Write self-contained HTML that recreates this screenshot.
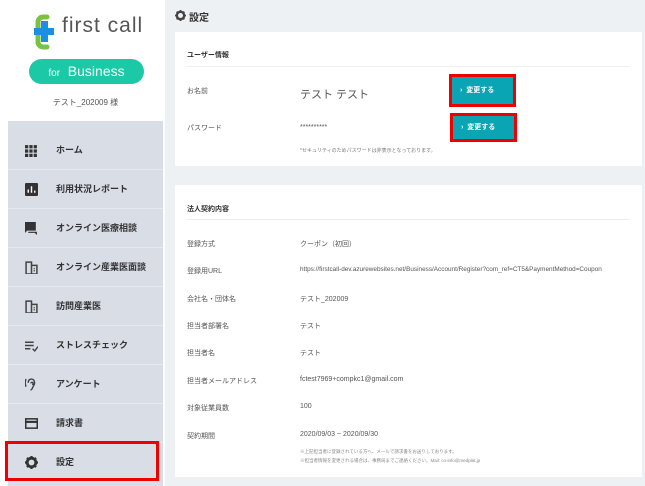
<!DOCTYPE html><html><head><meta charset="utf-8"><style>
*{margin:0;padding:0;box-sizing:border-box}
body{width:645px;height:486px;background:#fff;font-family:"Liberation Sans","Noto Sans CJK JP",sans-serif;position:relative;overflow:hidden;color:#555}
.abs{position:absolute}
.side{left:8px;top:4px;width:155px;height:482px;background:#fff}
.menu{left:8px;top:121px;width:155px;height:365px;background:#d8dde6}
.mi{position:absolute;left:8px;width:155px;height:39px;border-bottom:1px solid #e6e9ef;font-size:9px;font-weight:600;color:#333;line-height:39px;padding-left:48px}
.mi svg{position:absolute;left:17px;top:13px;width:13px;height:13px}
.main{left:165px;top:0;width:480px;height:486px;background:#eef1f4}
.card{position:absolute;background:#fff;left:175px;width:467px}
.t{position:absolute;font-size:7px;white-space:nowrap}
.btn{position:absolute;background:#0aa5b5;color:#fff;font-size:7px;font-weight:bold;line-height:27px;padding-left:8px;outline:3px solid #e00;outline-offset:0}
</style></head><body>
<div class="abs side"></div>
<svg class="abs" style="left:33px;top:13px" width="24" height="38" viewBox="0 0 24 38">
<path d="M14 4 H10 A5 5 0 0 0 5 9 V29 A5 5 0 0 0 10 34 H14" fill="none" stroke="#7cc242" stroke-width="5" stroke-linecap="round"/>
<rect x="1" y="15" width="20" height="7" fill="#1e8fe0"/><rect x="8" y="8" width="7" height="21" fill="#1e8fe0"/></svg>
<div class="abs" style="left:62px;top:14px;font-size:21px;color:#555;letter-spacing:1px">first call</div>
<div class="abs" style="left:29px;top:59px;width:115px;height:25px;border-radius:13px;background:#1cc9a6;color:#fff;text-align:center;line-height:25px;font-size:14px"><span style="font-size:10px">for</span>&nbsp; Business</div>
<div class="abs" style="left:0;width:171px;top:97px;text-align:center;font-size:8px;color:#555">テスト_202009 様</div>
<div class="abs menu"></div>
<div class="mi" style="top:131px"><svg viewBox="0 0 12 12" fill="#333"><rect x="0" y="1" width="3" height="3"/><rect x="4" y="1" width="3" height="3"/><rect x="8" y="1" width="3" height="3"/><rect x="0" y="5" width="3" height="3"/><rect x="4" y="5" width="3" height="3"/><rect x="8" y="5" width="3" height="3"/><rect x="0" y="9" width="3" height="3"/><rect x="4" y="9" width="3" height="3"/><rect x="8" y="9" width="3" height="3"/></svg>ホーム</div>
<div class="mi" style="top:170px"><svg viewBox="0 0 12 12"><rect width="12" height="12" rx="1" fill="#333"/><path d="M3 9V6M6 9V3M9 9V7" stroke="#fff" stroke-width="1.3"/></svg>利用状況レポート</div>
<div class="mi" style="top:209px"><svg viewBox="0 0 12 12" fill="#333"><path d="M0 0H10V8H2L0 10Z"/><path d="M11 3V12L9 10H3V9H11Z"/></svg>オンライン医療相談</div>
<div class="mi" style="top:248px"><svg viewBox="0 0 12 12" fill="none" stroke="#444" stroke-width="1.4"><path d="M1 12V1H6V12M6 4H11V12H1"/><path d="M8 7H9M8 9H9" /></svg>オンライン産業医面談</div>
<div class="mi" style="top:287px"><svg viewBox="0 0 12 12" fill="none" stroke="#444" stroke-width="1.4"><path d="M1 12V1H6V12M6 4H11V12H1"/><path d="M8 7H9M8 9H9"/></svg>訪問産業医</div>
<div class="mi" style="top:326px"><svg viewBox="0 0 12 12" fill="none" stroke="#444" stroke-width="1.3"><path d="M0 3H8M0 6H8M0 9H5M7 9L9 11L12 7"/></svg>ストレスチェック</div>
<div class="mi" style="top:365px"><svg viewBox="0 0 12 12" fill="none" stroke="#444" stroke-width="1.3"><path d="M5 11C7 11 7 8 8 7C9.5 5.5 9 1 6 1C3.5 1 3 3 3 4.5M5.5 5A1 1 0 1 1 6.5 6M1 1C0 3 0 6 1 8"/></svg>アンケート</div>
<div class="mi" style="top:404px"><svg viewBox="0 0 12 12" fill="none" stroke="#333" stroke-width="1.4"><rect x="0.7" y="1.7" width="10.6" height="8.6"/><path d="M1 4.5H11" stroke-width="2"/></svg>請求書</div>
<div class="mi" style="top:443px;border:none"><svg viewBox="0 0 12 12"><circle cx="6" cy="6" r="4" fill="none" stroke="#333" stroke-width="2.6"/><path d="M6 0V2.5M6 9.5V12M0 6H2.5M9.5 6H12M1.8 1.8L3.5 3.5M8.5 8.5L10.2 10.2M1.8 10.2L3.5 8.5M8.5 3.5L10.2 1.8" stroke="#333" stroke-width="2"/></svg>設定</div>
<div class="abs" style="left:5px;top:441px;width:154px;height:40px;border:3px solid #e00"></div>
<div class="abs main"></div>
<svg class="abs" style="left:175px;top:10px" width="11" height="11" viewBox="0 0 12 12"><circle cx="6" cy="6" r="4" fill="none" stroke="#444" stroke-width="2.6"/><path d="M6 0V2.5M6 9.5V12M0 6H2.5M9.5 6H12M1.8 1.8L3.5 3.5M8.5 8.5L10.2 10.2M1.8 10.2L3.5 8.5M8.5 3.5L10.2 1.8" stroke="#444" stroke-width="2"/></svg>
<div class="abs" style="left:189px;top:9px;font-size:10px;font-weight:bold;color:#333">設定</div>
<div class="card" style="top:32px;height:134px">
<div class="t" style="left:12px;top:18px;color:#333;font-weight:bold">ユーザー情報</div>
<div class="abs" style="left:12px;right:12px;top:34px;border-top:1px solid #eee"></div>
<div class="t" style="left:12px;top:54px">お名前</div>
<div class="t" style="left:125px;top:54px;font-size:11px;color:#555">テスト テスト</div>
<div class="t" style="left:12px;top:91px">パスワード</div>
<div class="t" style="left:125px;top:92px">**********</div>
<div class="t" style="left:125px;top:115px;font-size:5px;color:#777">*セキュリティのためパスワードは非表示となっております。</div>
</div>
<div class="btn" style="left:452px;top:77px;width:61px;height:27px">›&nbsp; 変更する</div>
<div class="btn" style="left:453px;top:116px;width:61px;height:23px;line-height:23px">›&nbsp; 変更する</div>
<div class="card" style="top:185px;height:292px">
<div class="t" style="left:12px;top:19px;color:#333;font-weight:bold">法人契約内容</div>
<div class="abs" style="left:12px;right:12px;top:34px;border-top:1px solid #eee"></div>
<div class="t" style="left:12px;top:54px">登録方式</div><div class="t" style="left:125px;top:54px">クーポン（初回）</div>
<div class="t" style="left:12px;top:81px">登録用URL</div><div class="t" style="left:125px;top:81px;font-size:6.4px">https://firstcall-dev.azurewebsites.net/Business/Account/Register?com_ref=CT5&amp;PaymentMethod=Coupon</div>
<div class="t" style="left:12px;top:109px">会社名・団体名</div><div class="t" style="left:125px;top:109px">テスト_202009</div>
<div class="t" style="left:12px;top:136px">担当者部署名</div><div class="t" style="left:125px;top:136px">テスト</div>
<div class="t" style="left:12px;top:163px">担当者名</div><div class="t" style="left:125px;top:163px">テスト</div>
<div class="t" style="left:12px;top:191px">担当者メールアドレス</div><div class="t" style="left:125px;top:191px">fctest7969+compkc1@gmail.com</div>
<div class="t" style="left:12px;top:218px">対象従業員数</div><div class="t" style="left:125px;top:218px">100</div>
<div class="t" style="left:12px;top:246px">契約期間</div><div class="t" style="left:125px;top:246px">2020/09/03 ~ 2020/09/30</div>
<div class="t" style="left:125px;top:264px;font-size:4.5px;color:#888">※上記担当者に登録されている方へ、メールで請求書をお送りしております。</div>
<div class="t" style="left:125px;top:273px;font-size:4.5px;color:#888">※担当者情報を変更される場合は、事務局までご連絡ください。Mail: co-info@medplat.jp</div>
</div>
</body></html>
